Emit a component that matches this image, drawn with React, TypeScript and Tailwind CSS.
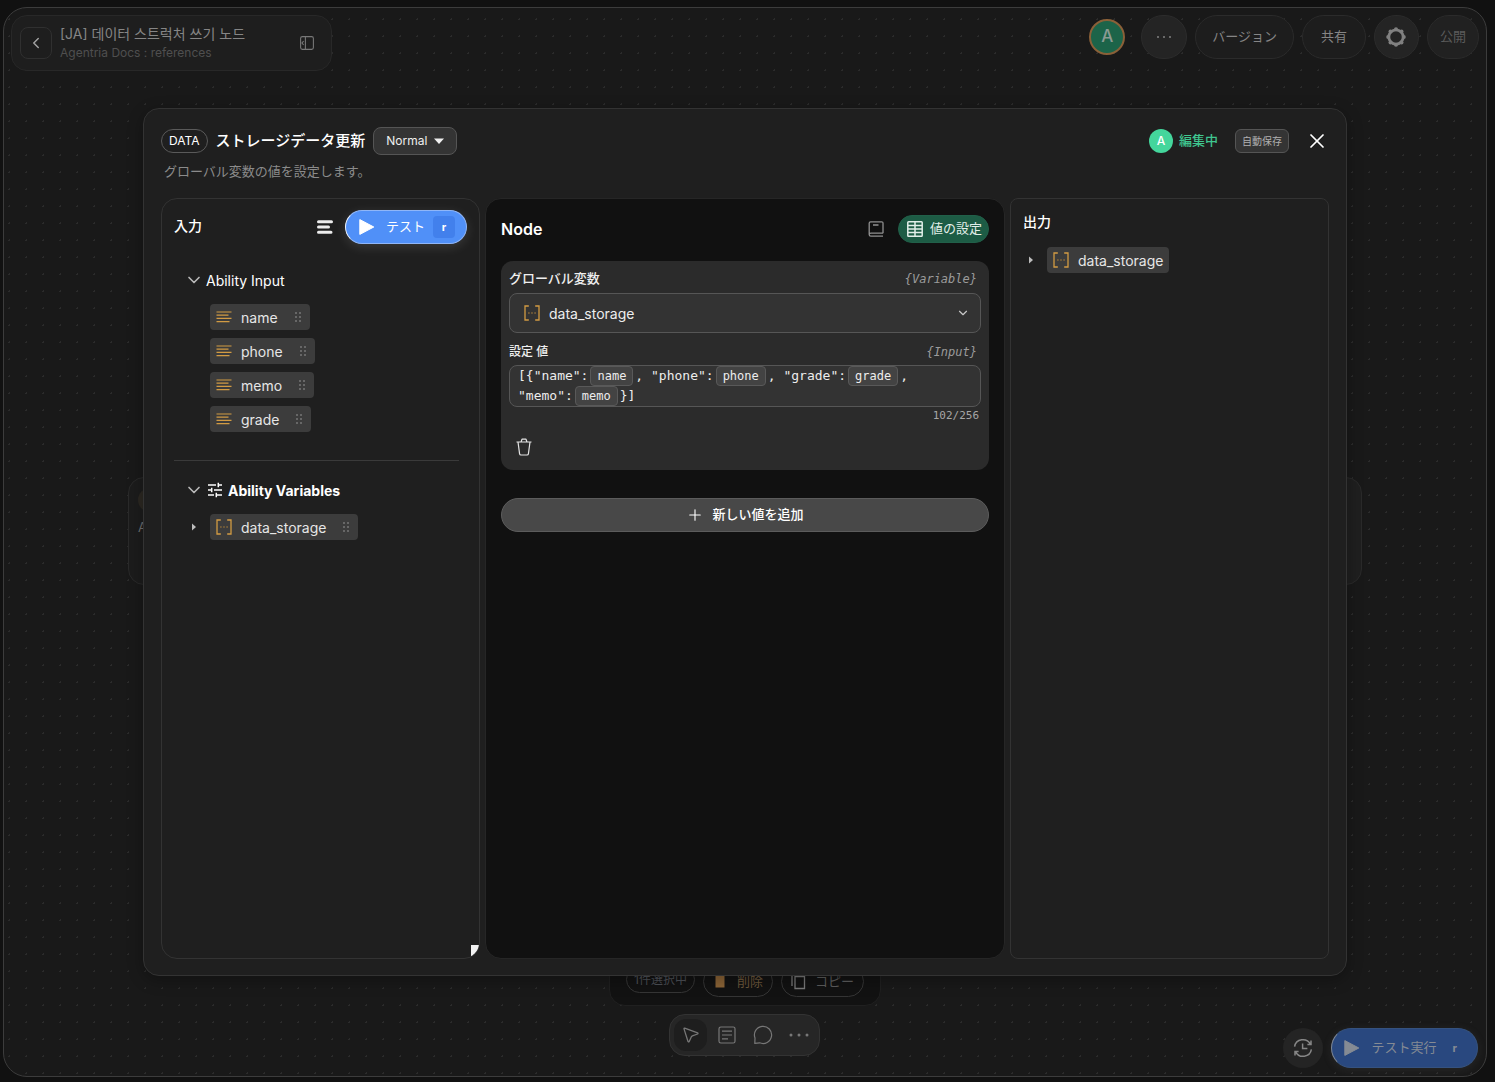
import { useState } from 'react'
import type { ReactNode } from 'react'
import { ChevronDown, ChevronLeft, Plus, X } from 'lucide-react'

const inputs = ['name', 'phone', 'memo', 'grade']

function TextTypeIcon() {
  return (
    <svg className="w-4 h-4 shrink-0" viewBox="0 0 16 16" fill="none" stroke="#d29b43" strokeWidth="1.2">
      <path d="M0.5 3H15.5M0.5 6.2H12.5M0.5 9.4H15.5M0.5 12.6H13.5" />
    </svg>
  )
}

function ArrayTypeIcon() {
  return (
    <svg className="w-4 h-4 shrink-0" viewBox="0 0 16 16" fill="none" stroke="#d29b43" strokeWidth="1.3">
      <path d="M4.8 1H1V15H4.8M11.2 1H15V15H11.2" />
      <path d="M4.2 8H5.6M7.3 8H8.7M10.4 8H11.8" stroke="#95713a" strokeWidth="1.4" />
    </svg>
  )
}

function GripIcon() {
  return (
    <svg className="w-2 h-3 shrink-0" viewBox="0 0 8 12" fill="#767676">
      <circle cx="2" cy="2" r="1" />
      <circle cx="6" cy="2" r="1" />
      <circle cx="2" cy="6" r="1" />
      <circle cx="6" cy="6" r="1" />
      <circle cx="2" cy="10" r="1" />
      <circle cx="6" cy="10" r="1" />
    </svg>
  )
}

function PlayIcon() {
  return (
    <svg className="w-4 h-[18px] shrink-0" viewBox="0 0 16 18" fill="currentColor" stroke="currentColor" strokeWidth="1" strokeLinejoin="round">
      <path d="M0.8 1.6V16.4L14.8 9Z" />
    </svg>
  )
}

function ExpandArrow() {
  return (
    <svg className="w-[6px] h-2 shrink-0" viewBox="0 0 6 8" fill="#bdbdbd">
      <path d="M1 0.5V7.5L5 4Z" />
    </svg>
  )
}

function TrashIcon() {
  return (
    <svg className="w-4 h-[18px]" viewBox="0 0 16 18" fill="none" stroke="#e4e4e4" strokeWidth="1.2" strokeLinejoin="round">
      <path d="M0.5 4H15.5M5 4L6 1.2H10L11 4M2 4L3.6 15.8Q3.8 17 5 17H11Q12.2 17 12.4 15.8L14 4" />
    </svg>
  )
}

function GearIcon() {
  return (
    <svg className="w-5 h-5" viewBox="0 0 20 20" fill="#808080">
      <circle cx="10" cy="10" r="7.2" fill="none" stroke="#808080" strokeWidth="2.8" />
      <circle cx="10" cy="2.2" r="2" />
      <circle cx="15.5" cy="4.5" r="2" />
      <circle cx="17.8" cy="10" r="2" />
      <circle cx="15.5" cy="15.5" r="2" />
      <circle cx="10" cy="17.8" r="2" />
      <circle cx="4.5" cy="15.5" r="2" />
      <circle cx="2.2" cy="10" r="2" />
      <circle cx="4.5" cy="4.5" r="2" />
    </svg>
  )
}

function Chip({ name, icon, grip = true }: { name: string; icon: ReactNode; grip?: boolean }) {
  return (
    <div className="inline-flex items-center h-[26px] rounded-[4px] bg-[#3c3c3c] px-[6px] text-[14px] text-[#e6e6e6]">
      {icon}
      <span className="ml-[9px]">{name}</span>
      {grip && (
        <span className="ml-4 mr-[2px]">
          <GripIcon />
        </span>
      )}
    </div>
  )
}

function Token({ children }: { children: ReactNode }) {
  return (
    <span className="inline-block h-5 leading-[18px] px-[6px] mx-[2px] rounded-[4px] border border-[#595959] bg-[#434343] text-[12px] align-top">
      {children}
    </span>
  )
}

function TopBar() {
  return (
    <header className="flex items-start justify-between">
      <div className="flex items-center w-[321px] h-14 pl-2 pr-[17px] rounded-2xl border border-[#282828] bg-[#1e1e1e]">
        <button aria-label="Back" className="flex items-center justify-center w-8 h-8 rounded-lg border border-[#303030] text-[#a0a0a0]">
          <ChevronLeft className="w-[18px] h-[18px]" />
        </button>
        <div className="ml-2 flex-1">
          <h1 className="text-[14px] leading-5 text-[#858585]">[JA] 데이터 스트럭처 쓰기 노드</h1>
          <p className="text-[12px] leading-[18px] text-[#4f4f4f]">Agentria Docs : references</p>
        </div>
        <button aria-label="Toggle sidebar" className="text-[#777777]">
          <svg className="w-[14px] h-[14px]" viewBox="0 0 14 14" fill="none" stroke="currentColor" strokeWidth="1.1">
            <rect x="0.6" y="0.6" width="12.8" height="12.8" rx="1.8" />
            <path d="M5.4 0.6V13.4M3.6 5.2L2 7L3.6 8.8" />
          </svg>
        </button>
      </div>

      <div className="flex items-center gap-2 h-11 text-[13px] text-[#858585]">
        <div className="flex items-center justify-center w-9 h-9 mr-2 rounded-full border-2 border-[#8a6038] bg-[#1c6449] text-[17px] font-medium text-[#8b9a93]">
          A
        </div>
        <button aria-label="More" className="flex items-center justify-center gap-1 w-[46px] h-11 rounded-full border border-[#2c2c2c] bg-[#242424]">
          <span className="w-[2px] h-[2px] bg-[#696969]" />
          <span className="w-[2px] h-[2px] bg-[#696969]" />
          <span className="w-[2px] h-[2px] bg-[#696969]" />
        </button>
        <button className="h-11 px-4 rounded-full border border-[#2b2b2b] bg-[#1d1d1d]">バージョン</button>
        <button className="h-11 px-[18px] rounded-full border border-[#2b2b2b] bg-[#1d1d1d]">共有</button>
        <button aria-label="Settings" className="flex items-center justify-center w-[45px] h-11 rounded-full border border-[#2c2c2c] bg-[#242424]">
          <GearIcon />
        </button>
        <button className="h-11 px-3 rounded-full border border-[#2b2b2b] bg-[#212121] text-[#5b5b5b]">公開</button>
      </div>
    </header>
  )
}

function BottomBar() {
  return (
    <footer className="mt-auto grid grid-cols-[1fr_auto_1fr] items-end">
      <div />
      <div className="flex flex-col items-center pb-[13px]">
        <div className="flex items-start gap-2 h-16 px-4 pt-[23px] mb-2 rounded-2xl border border-[#202020] bg-[#121212] text-[13px] text-[#5c5c5c]">
          <button className="h-[27px] px-[7px] rounded-full border border-[#353535] text-[12px] text-[#4c4f55]">1件選択中</button>
          <button className="flex items-center gap-[10px] h-[31px] px-[9px] rounded-full border border-[#353535] text-[#6b563b]">
            <svg className="w-[14px] h-4" viewBox="0 0 14 16" fill="#8a6336">
              <path d="M2.5 2H11.5V13.5H2.5Z" />
            </svg>
            削除
          </button>
          <button className="flex items-center gap-2 h-[31px] px-[9px] rounded-full border border-[#353535]">
            <svg className="w-4 h-[18px]" viewBox="0 0 16 18" fill="none" stroke="#777777" strokeWidth="1.3">
              <path d="M1 1V13M4 3.5H13.5V15.5H4Z" />
            </svg>
            コピー
          </button>
        </div>
        <nav className="flex items-center gap-[3px] h-[42px] px-1 rounded-2xl border border-[#333333] bg-[#262626] text-[#777777]">
          <button aria-label="Select" className="flex items-center justify-center w-[33px] h-8 rounded-xl bg-[#1e1e1e]">
            <svg className="w-4 h-4" viewBox="0 0 16 16" fill="none" stroke="currentColor" strokeWidth="1.3" strokeLinejoin="round">
              <path d="M1.7 1.1L14.6 5.9Q15.4 6.4 14.6 7L9.4 8.8Q8.8 9 8.5 9.6L6.2 14.6Q5.5 15.4 5 14.5L1 1.9Q0.9 1 1.7 1.1Z" />
            </svg>
          </button>
          <button aria-label="Note" className="flex items-center justify-center w-[33px] h-8">
            <svg className="w-[18px] h-[18px]" viewBox="0 0 18 18" fill="none" stroke="currentColor" strokeWidth="1.2">
              <rect x="1" y="1" width="16" height="16" rx="1.8" />
              <path d="M4 5.2H14M4 9H14M4 12.8H10" />
            </svg>
          </button>
          <button aria-label="Comment" className="flex items-center justify-center w-[33px] h-8">
            <svg className="w-5 h-5" viewBox="0 0 20 20" fill="none" stroke="currentColor" strokeWidth="1.2" strokeLinejoin="round">
              <path d="M1.8 18.4L2 13A8.6 8.6 0 1 1 6.6 17.8Z" />
            </svg>
          </button>
          <button aria-label="More tools" className="flex items-center justify-center w-[33px] h-8">
            <svg className="w-5 h-1" viewBox="0 0 20 4" fill="currentColor">
              <circle cx="2" cy="2" r="1.5" />
              <circle cx="10" cy="2" r="1.5" />
              <circle cx="18" cy="2" r="1.5" />
            </svg>
          </button>
        </nav>
      </div>

      <div className="flex items-center justify-self-end gap-2 pr-px pb-px">
        <button aria-label="History" className="flex items-center justify-center w-10 h-10 rounded-full bg-[#242424] text-[#868686]">
          <svg className="w-5 h-5" viewBox="0 0 20 20" fill="none" stroke="currentColor" strokeWidth="1.5">
            <path d="M1.6 8.6A8.4 8.2 0 0 1 17.4 6.2M18 2.4V6.4H14.4M18.4 11.4A8.4 8.2 0 0 1 2.6 13.8M2 17.6V13.6H5.6M9.6 5.6V10.6H14.4" />
          </svg>
        </button>
        <button className="flex items-center h-10 pl-3 pr-5 rounded-full border border-[#35527f] border-l-[#7d8796] bg-[#29487f] text-[13px] text-[#858b94] shadow-[0_2px_10px_rgba(120,120,120,0.15)]">
          <PlayIcon />
          <span className="ml-3">テスト実行</span>
          <span className="ml-4 font-bold text-[11px]">r</span>
        </button>
      </div>
    </footer>
  )
}

function InputPanel() {
  return (
    <section className="relative overflow-hidden rounded-2xl border border-[#333333] bg-[#1f1f1f]">
      <div className="flex items-center px-3 pt-[11px]">
        <h3 className="flex-1 pb-1 text-[14px] font-medium text-white">入力</h3>
        <button aria-label="Format" className="mr-3 text-[#ececec]">
          <svg className="w-4 h-[14px]" viewBox="0 0 16 14" fill="none" stroke="currentColor" strokeWidth="3" strokeLinecap="round">
            <path d="M1.5 1.8H14.5M1.5 7H11.5M1.5 12.2H14" />
          </svg>
        </button>
        <button className="flex items-center h-[34px] pl-[13px] pr-[11px] rounded-full border border-[#8fb6f8] border-l-[#eef4ff] bg-[#5090f8] text-[13px] text-white shadow-[0_3px_12px_rgba(255,255,255,0.12)]">
          <PlayIcon />
          <span className="ml-[11px]">テスト</span>
          <span className="flex items-center justify-center w-[22px] h-[22px] ml-2 rounded-[4px] bg-[#4280ec] text-[11px] font-bold">r</span>
        </button>
      </div>

      <div className="ml-3 mr-5 pl-[14px] pt-6 pb-7 border-b border-[#3a3a3a]">
        <h4 className="flex items-center h-6 text-[14px] text-white">
          <ChevronDown className="w-5 h-5 mr-[2px] -ml-1 text-[#b9b9b9]" />
          Ability Input
        </h4>
        <ul className="flex flex-col items-start gap-2 mt-3 ml-[22px]">
          {inputs.map((name) => (
            <li key={name} className="flex">
              <Chip name={name} icon={<TextTypeIcon />} />
            </li>
          ))}
        </ul>
      </div>

      <div className="ml-[26px] pt-[17px]">
        <h4 className="flex items-center h-6 text-[14px] font-bold text-white">
          <ChevronDown className="w-5 h-5 mr-[3px] -ml-1 text-[#b9b9b9]" />
          <svg className="w-4 h-4 mr-[5px]" viewBox="0 0 16 16" fill="none" stroke="currentColor" strokeWidth="1.5">
            <path d="M1 3H9M11.5 3H15M11.3 0.8V5.2M1 8H4.5M7 8H15M4.7 5.8V10.2M1 13H7M9.5 13H15M9.3 10.8V15.2" />
          </svg>
          Ability Variables
        </h4>
        <div className="flex items-center mt-3">
          <button aria-label="Expand" className="w-[22px] pl-[3px]">
            <ExpandArrow />
          </button>
          <Chip name="data_storage" icon={<ArrayTypeIcon />} />
        </div>
      </div>

      {/* resize handle, cut by the panel's rounded corner */}
      <div className="absolute right-0 bottom-0 w-2 h-[13px] bg-[#f2f2f2]" />
    </section>
  )
}

function NodePanel() {
  const [variable, setVariable] = useState('data_storage')

  return (
    <section className="rounded-2xl border border-[#262626] bg-[#111111] px-[15px] pt-[15px]">
      <div className="flex items-center h-[30px]">
        <h3 className="flex-1 text-[16px] font-semibold text-white">Node</h3>
        <button aria-label="Docs" className="mr-[14px] text-[#909090]">
          <svg className="w-4 h-4" viewBox="0 0 16 16" fill="none" stroke="currentColor" strokeWidth="1.3" strokeLinejoin="round">
            <path d="M15 12.2V2.2Q15 0.8 13.6 0.8H2.6Q1.2 0.8 1.2 2.2V13.6Q1.2 15.2 2.8 15.2H15M1.2 13.4Q1.4 12.2 2.8 12.2H15M5 4H10.5" />
          </svg>
        </button>
        <button className="flex items-center h-7 pl-2 pr-[6px] rounded-full border border-[#216049] bg-[#1d5c45] text-[13px] text-[#e2efe9]">
          <svg className="w-4 h-4 mr-[7px]" viewBox="0 0 16 16" fill="none" stroke="currentColor" strokeWidth="1.5">
            <rect x="0.8" y="0.8" width="14.4" height="14.4" rx="0.8" />
            <path d="M0.8 4.4H15.2M0.8 8H15.2M0.8 11.6H15.2M8 0.8V15.2" />
          </svg>
          値の設定
        </button>
      </div>

      <div className="mt-[17px] px-2 pt-2 pb-[14px] rounded-xl bg-[#2b2b2b]">
        <div className="flex items-center justify-between h-5 pr-1">
          <label htmlFor="variable" className="text-[13px] font-medium text-[#efefef]">グローバル変数</label>
          <span className="font-['DejaVu_Sans_Mono',monospace] text-[12px] italic text-[#9b9b9b]">{'{Variable}'}</span>
        </div>
        <div className="flex items-center h-10 mt-1 pl-[14px] pr-[10px] rounded-lg border border-[#565656] bg-[#333333]">
          <ArrayTypeIcon />
          <select
            id="variable"
            value={variable}
            onChange={(e) => setVariable(e.target.value)}
            className="flex-1 ml-[9px] appearance-none bg-transparent text-[14px] text-[#ededed] outline-none"
          >
            <option value="data_storage">data_storage</option>
          </select>
          <ChevronDown className="w-[14px] h-[14px] text-[#c8c8c8]" />
        </div>

        <div className="flex items-center justify-between h-5 mt-[9px] pr-1">
          <span id="value-label" className="text-[12px] font-medium text-[#efefef]">設定 値</span>
          <span className="font-['DejaVu_Sans_Mono',monospace] text-[12px] italic text-[#9b9b9b]">{'{Input}'}</span>
        </div>
        <div
          role="textbox"
          aria-labelledby="value-label"
          aria-multiline="true"
          contentEditable
          suppressContentEditableWarning
          className="mt-[3px] px-2 rounded-lg border border-[#565656] bg-[#333333] font-['DejaVu_Sans_Mono',monospace] text-[13px] leading-5 text-[#ededed] outline-none"
        >
          [{'{'}"name":<Token>name</Token>, "phone":<Token>phone</Token>, "grade":<Token>grade</Token>,
          <br />
          "memo":<Token>memo</Token>{'}'}]
        </div>
        <p className="mt-px pr-[2px] text-right font-['DejaVu_Sans_Mono',monospace] text-[11px] leading-4 text-[#a6a6a6]">102/256</p>
        <button aria-label="Delete" className="block mt-[14px] ml-[7px]">
          <TrashIcon />
        </button>
      </div>

      <button className="flex items-center justify-center gap-2 w-full h-[34px] mt-7 rounded-full border border-[#5c5c5c] bg-[#484848] text-[13px] font-medium text-white">
        <Plus className="w-[18px] h-[18px]" strokeWidth={1.5} />
        新しい値を追加
      </button>
    </section>
  )
}

function OutputPanel() {
  return (
    <section className="rounded-lg border border-[#333333] bg-[#1f1f1f] px-3 pt-[11px]">
      <h3 className="text-[14px] leading-6 font-medium text-white">出力</h3>
      <div className="flex items-center mt-[13px]">
        <button aria-label="Expand" className="w-6 pl-[5px]">
          <ExpandArrow />
        </button>
        <Chip name="data_storage" icon={<ArrayTypeIcon />} grip={false} />
      </div>
    </section>
  )
}

function NodeDialog() {
  const [mode, setMode] = useState('Normal')

  return (
    <div className="absolute inset-0 flex px-[139px] py-[100px]">
      <div
        role="dialog"
        aria-label="ストレージデータ更新"
        className="flex flex-col flex-1 px-[17px] pt-[18px] pb-4 rounded-2xl border border-[#333333] bg-[#1f1f1f] shadow-[0_4px_16px_rgba(0,0,0,0.3)]"
      >
        <div className="flex items-center h-7">
          <span className="flex items-center h-6 px-[7px] rounded-full border border-[#5a5a5a] text-[12px] text-white">DATA</span>
          <h2 className="ml-2 text-[15px] font-medium text-white">ストレージデータ更新</h2>
          <label className="flex items-center h-7 ml-2 px-3 rounded-lg border border-[#555555] bg-[#343434] text-[12px] text-[#efefef]">
            <select
              aria-label="Mode"
              value={mode}
              onChange={(e) => setMode(e.target.value)}
              className="appearance-none bg-transparent outline-none"
            >
              <option value="Normal">Normal</option>
            </select>
            <svg className="w-[10px] h-[6px] ml-[6px]" viewBox="0 0 10 6" fill="currentColor">
              <path d="M0 0.5H10L5 6Z" />
            </svg>
          </label>

          <div className="flex items-center ml-auto">
            <span className="flex items-center justify-center w-6 h-6 rounded-full bg-[#44d69c] text-[12px] font-medium text-white">A</span>
            <span className="ml-[6px] text-[13px] font-medium text-[#3fc68f]">編集中</span>
            <button className="h-6 ml-[17px] px-[6px] rounded-md border border-[#555555] bg-[#343434] text-[10px] text-[#b0b0b0]">自動保存</button>
            <button aria-label="Close" className="ml-4 text-white">
              <X className="w-6 h-6" strokeWidth={1.75} />
            </button>
          </div>
        </div>
        <p className="mt-[6px] ml-[3px] text-[13px] leading-5 text-[#8b8b8b]">グローバル変数の値を設定します。</p>

        <div className="flex-1 grid grid-cols-[319px_1fr_319px] gap-[5px] mt-[17px]">
          <InputPanel />
          <NodePanel />
          <OutputPanel />
        </div>
      </div>
    </div>
  )
}

export default function App() {
  return (
    <div className="flex h-screen min-h-[700px] bg-[#111111] pt-[7px] pr-2 pb-[5px] pl-[3px] font-[Inter,'Noto_Sans_CJK_JP','Noto_Sans_CJK_KR',sans-serif]">
      <main className="relative flex flex-col flex-1 p-[7px] overflow-hidden rounded-3xl border border-[#3c3c3c] bg-[#191919] bg-[radial-gradient(circle_at_center,#2b2b2b_1px,transparent_1px)] bg-[size:17px_17px] bg-[position:-3px_3px]">
        <TopBar />
        <div className="absolute left-[124px] top-[469px] w-36 h-[108px] p-[9px] rounded-2xl border border-[#2a2a2a] bg-[#1c1c1c] text-[13px] text-[#6e6e6e]">
          <div className="w-6 h-6 mt-px rounded-full bg-[#2c2822]" />
          <p className="mt-[6px]">Ability</p>
        </div>
        <div className="absolute right-[124px] top-[469px] w-36 h-[108px] rounded-2xl border border-[#2a2a2a] bg-[#1f1f1f]" />
        <BottomBar />
        <NodeDialog />
      </main>
    </div>
  )
}
